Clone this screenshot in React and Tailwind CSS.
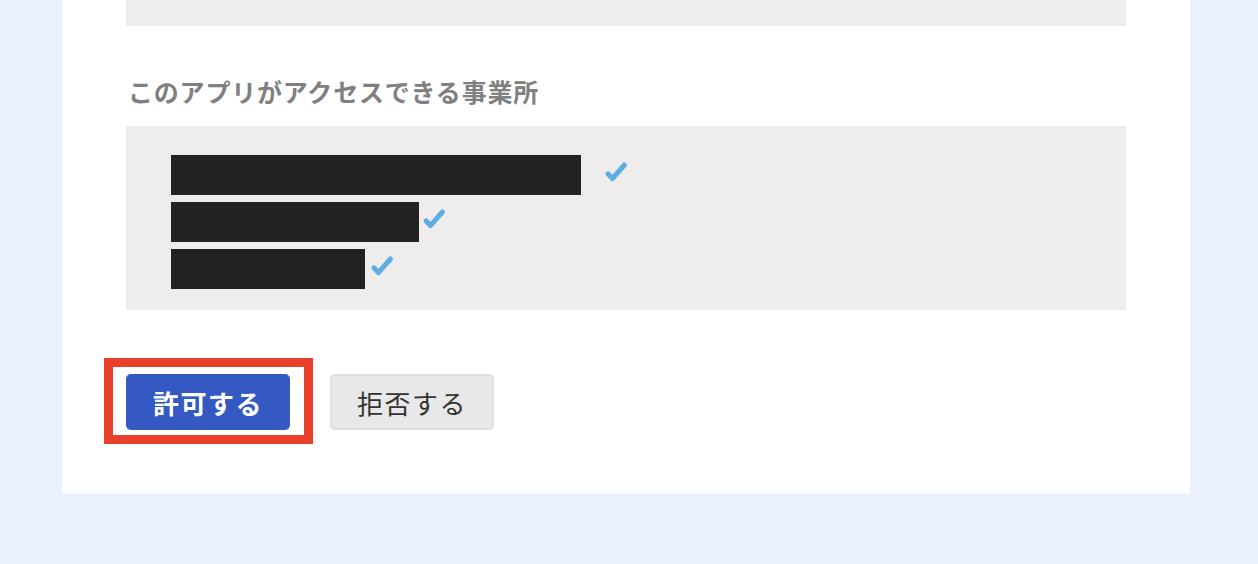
import React from 'react'

const font = { fontFamily: '"Noto Sans CJK JP", "Noto Sans", sans-serif' }

function Check({ className }) {
    return (
        <svg className={className} width="24" height="22" viewBox="0 0 24 22">
            <path
                d="M4 12.8 L8.4 17.6 L20.4 4"
                fill="none"
                stroke="#5dade2"
                strokeWidth="5"
                strokeLinecap="round"
                strokeLinejoin="round"
            />
        </svg>
    )
}

export default function App() {
    const offices = [
        { width: 'w-[410px]', gap: 'ml-[23px]' },
        { width: 'w-[248px]', gap: 'ml-[3px]' },
        { width: 'w-[194px]', gap: 'ml-[5px]' },
    ]

    return (
        <div className="min-h-[564px] bg-[#eaf0fc] px-[62px] pb-[70px]" style={font}>
            <div className="w-[1128px] bg-white px-[64px] pb-[64px]">
                {/* tail of the previous grey panel */}
                <div className="h-[26px] bg-[#eeecec]" />

                <h2 className="mt-[47px] mb-[16px] pl-[2px] text-[25px] leading-[37px] font-bold tracking-[0.8px] text-[#808080]">
                    このアプリがアクセスできる事業所
                </h2>

                <div className="bg-[#eeecec] pl-[45px] pt-[29px] pb-[21px] flex flex-col gap-[7px]">
                    {offices.map((o, i) => (
                        <div key={i} className="flex items-center h-[40px]">
                            <div className={`${o.width} h-[40px] bg-[#222222]`} />
                            <Check className={`${o.gap} mb-[6px]`} />
                        </div>
                    ))}
                </div>

                <div className="mt-[64px] flex items-center gap-[40px]">
                    <div className="relative">
                        <div className="absolute left-[-22px] top-[-16px] w-[209px] h-[86px] border-[9px] border-[#e8402a]" />
                        <button className="relative w-[164px] h-[56px] rounded-[5px] bg-[#3459c3] text-white text-[26px] font-bold tracking-[1.5px]">
                            許可する
                        </button>
                    </div>
                    <button className="w-[164px] h-[56px] rounded-[5px] bg-[#e8e8e8] border-2 border-[#dedede] text-[#333333] text-[26px] tracking-[1.5px]">
                        拒否する
                    </button>
                </div>
            </div>
        </div>
    )
}
